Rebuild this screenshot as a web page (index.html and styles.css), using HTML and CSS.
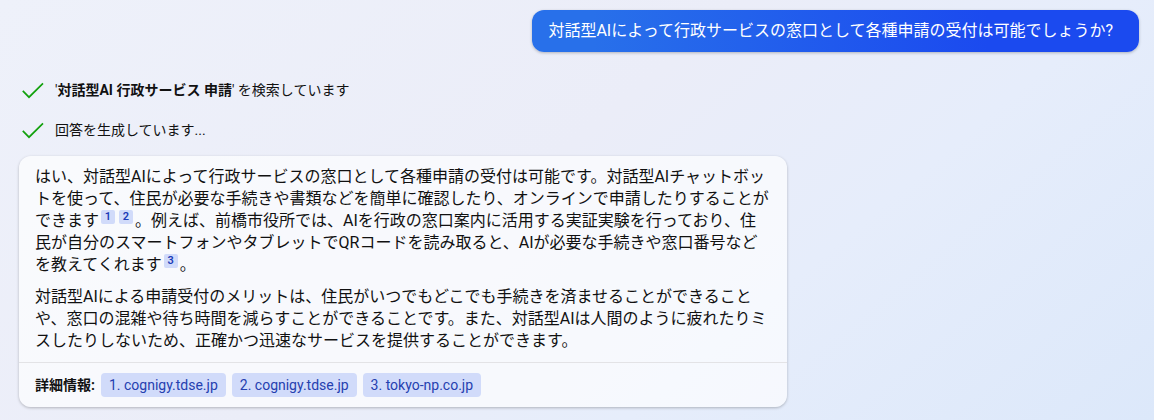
FILE: index.html
```html
<!DOCTYPE html>
<html lang="ja">
<head>
<meta charset="utf-8">
<meta name="viewport" content="width=device-width, initial-scale=1">
<title>チャット</title>
<link rel="stylesheet" href="styles.css">
</head>
<body>
<main class="chat">
  <div class="question">対話型AIによって行政サービスの窓口として各種申請の受付は可能でしょうか?</div>
  <ul class="steps">
    <li class="step">
      <svg class="check" viewBox="0 0 22 20" aria-hidden="true"><path d="M.8 10.8 7 17.2 21 3.4"/></svg>
      <span>'<b>対話型AI 行政サービス 申請</b>' を検索しています</span>
    </li>
    <li class="step">
      <svg class="check" viewBox="0 0 22 20" aria-hidden="true"><path d="M.8 10.8 7 17.2 21 3.4"/></svg>
      <span>回答を生成しています...</span>
    </li>
  </ul>
  <article class="answer">
    <div class="answer-body">
      <p>はい、対話型AIによって行政サービスの窓口として各種申請の受付は可能です。対話型AIチャットボットを使って、住民が必要な手続きや書類などを簡単に確認したり、オンラインで申請したりすることができます<a class="cite" href="#source-1">1</a><a class="cite" href="#source-2">2</a>。例えば、前橋市役所では、AIを行政の窓口案内に活用する実証実験を行っており、住民が自分のスマートフォンやタブレットでQRコードを読み取ると、AIが必要な手続きや窓口番号などを教えてくれます<a class="cite" href="#source-3">3</a>。</p>
      <p>対話型AIによる申請受付のメリットは、住民がいつでもどこでも手続きを済ませることができることや、窓口の混雑や待ち時間を減らすことができることです。また、対話型AIは人間のように疲れたりミスしたりしないため、正確かつ迅速なサービスを提供することができます。</p>
    </div>
    <footer class="sources">
      <span class="sources-label">詳細情報:</span>
      <a class="source" id="source-1" href="#source-1">1. cognigy.tdse.jp</a>
      <a class="source" id="source-2" href="#source-2">2. cognigy.tdse.jp</a>
      <a class="source" id="source-3" href="#source-3">3. tokyo-np.co.jp</a>
    </footer>
  </article>
</main>
</body>
</html>
```
FILE: styles.css
```css
* {
  box-sizing: border-box;
}

body {
  margin: 0;
  min-height: 100vh;
  color: #111;
  font-family: Roboto, "Noto Sans CJK JP", sans-serif;
  font-size: 16px;
  line-height: 22px;
  background: linear-gradient(140deg, #eef1fa 0%, #ebedf8 45%, #e6edfb 68%, #dce8fa 100%);
}

.chat {
  display: flex;
  flex-direction: column;
  align-items: flex-start;
  padding: 10px 15px 12px 19px;
}

.question {
  align-self: flex-end;
  padding: 10px 26px 10px 16px;
  border-radius: 12px;
  color: #fff;
  background: linear-gradient(90deg, #2870ea 10%, #1b4aef 75%);
  box-shadow: 0 1px 3px rgba(0, 0, 0, 0.25);
}

.steps {
  display: flex;
  flex-direction: column;
  gap: 20px;
  margin: 28px 0 16px;
  padding: 0 3px;
  list-style: none;
  font-size: 14px;
  line-height: 20px;
}

.step {
  display: flex;
  align-items: center;
  gap: 11px;
}

.check {
  width: 22px;
  height: 20px;
  fill: none;
  stroke: #13a10e;
  stroke-width: 1.7;
}

.answer {
  width: 100%;
  max-width: 768px;
  border-radius: 12px;
  background: rgba(255, 255, 255, 0.65);
  box-shadow: 0 1px 3px rgba(0, 0, 0, 0.25);
}

.answer-body {
  padding: 10px 16px;
}

.answer p {
  margin: 0;
}

.answer p + p {
  margin-top: 10px;
}

.cite {
  display: inline-block;
  width: 14px;
  height: 14px;
  margin: 0 2px;
  border-radius: 2px;
  color: #1b3bb8;
  background: #d1dbfa;
  font-size: 11px;
  font-weight: 600;
  line-height: 14px;
  text-align: center;
  text-decoration: none;
  vertical-align: 6px;
}

.sources {
  display: flex;
  flex-wrap: wrap;
  align-items: center;
  gap: 6px;
  padding: 10px 16px;
  border-top: 1px solid #e3e3e6;
  font-size: 14px;
}

.sources-label {
  font-weight: 700;
}

.source {
  padding: 0 8px;
  border-radius: 4px;
  color: #2540b0;
  background: #d1dbfa;
  line-height: 24px;
  text-decoration: none;
}
```
